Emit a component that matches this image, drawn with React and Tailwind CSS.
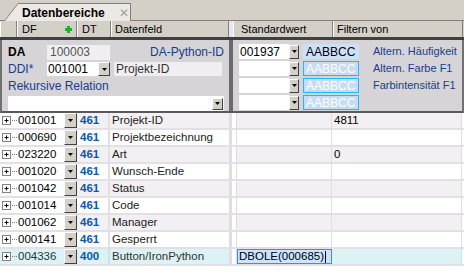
import React from "react";

const rows = [
  { df: "001001", dt: "461", name: "Projekt-ID", std: "", filt: "4811" },
  { df: "000690", dt: "461", name: "Projektbezeichnung", std: "", filt: "" },
  { df: "023220", dt: "461", name: "Art", std: "", filt: "0" },
  { df: "001020", dt: "461", name: "Wunsch-Ende", std: "", filt: "" },
  { df: "001042", dt: "461", name: "Status", std: "", filt: "" },
  { df: "001014", dt: "461", name: "Code", std: "", filt: "" },
  { df: "001062", dt: "461", name: "Manager", std: "", filt: "" },
  { df: "000141", dt: "461", name: "Gesperrt", std: "", filt: "" },
];

const filterLabels = ["Altern. Häufigkeit", "Altern. Farbe F1", "Farbintensität F1", ""];

const DropBtn = ({ className = "" }) => (
  <div
    className={
      "flex items-center justify-center bg-[#d4d0c8] border border-t-white border-l-white border-r-[#404040] border-b-[#404040] " +
      className
    }
  >
    <svg width="5" height="3" viewBox="0 0 5 3">
      <path d="M0 0h5L2.5 3z" fill="#000" />
    </svg>
  </div>
);

const Expander = () => (
  <div className="flex items-center w-[17px] shrink-0 pl-[2px]">
    <svg width="15" height="9" viewBox="0 0 15 9">
      <rect x="0.5" y="0.5" width="8" height="8" fill="#fff" stroke="#808080" />
      <path d="M2.5 4.5h4M4.5 2.5v4" stroke="#000" />
      <path d="M10 4.5h1M12 4.5h1M14 4.5h1" stroke="#808080" />
    </svg>
  </div>
);

const HeadCell = ({ w, children, className = "" }) => (
  <div
    className={
      "h-full flex items-center border-r border-r-[#808080] shadow-[inset_1px_0_0_#fff] " +
      w +
      " " +
      className
    }
  >
    {children}
  </div>
);

export default function App() {
  return (
    <div
      className="w-[464px] h-[276px] bg-white overflow-hidden text-[11px] text-black"
      style={{ fontFamily: "Tahoma, 'Liberation Sans', Arial, sans-serif" }}
    >
      {/* tab strip */}
      <div className="h-[21px] bg-[#d4d0c8] relative border-b border-b-[#808080]">
        <div className="absolute left-[4px] top-[3px] h-[18px] w-[127px] flex">
          <svg width="14" height="18" viewBox="0 0 14 18" className="shrink-0">
            <path d="M0 18L14 0V18z" fill="#ece9e4" />
            <path d="M0.5 18L14 0.5" stroke="#808080" />
          </svg>
          <div className="flex-1 bg-[#ece9e4] border-t border-t-[#808080] border-r border-r-[#808080] flex items-center pl-[4px]">
            <span className="font-bold text-[12px] leading-none">Datenbereiche</span>
            <span className="ml-[14px] text-[#a0a0a0] text-[12px] leading-none">✕</span>
          </div>
        </div>
      </div>

      {/* column header */}
      <div className="h-[16px] flex bg-[#d4d0c8] border-b-[3px] border-b-[#404040] box-content">
        <HeadCell w="w-[17px]" />
        <HeadCell w="w-[60px]" className="pl-[5px] justify-between pr-[4px]">
          <span>DF</span>
          <svg width="7" height="7" viewBox="0 0 7 7">
            <path d="M2 0h3v2h2v3H5v2H2V5H0V2h2z" fill="#22b022" />
          </svg>
        </HeadCell>
        <HeadCell w="w-[34px]" className="pl-[5px]">DT</HeadCell>
        <HeadCell w="w-[118px]" className="pl-[4px]">Datenfeld</HeadCell>
        <div className="w-[4px] h-full bg-[#e8e6ea]" />
        <HeadCell w="w-[100px]" className="pl-[8px]">Standardwert</HeadCell>
        <HeadCell w="w-[130px]" className="pl-[4px]">Filtern von</HeadCell>
        <div className="flex-1" />
      </div>

      {/* top panel */}
      <div className="h-[73px] flex bg-[#d6d4d6] border-l-[2px] border-l-[#707070] border-b-[2px] border-b-[#5a5a5a] border-r-[2px] border-r-[#707070]">
        <div className="w-[227px] flex flex-col pl-[6px] pt-[4px]">
          <div className="flex items-center h-[16px]">
            <span className="font-bold text-[12px] w-[39px]">DA</span>
            <div className="w-[63px] h-[15px] bg-[#f0eef0] text-[#555] text-[12px] pl-[3px] flex items-center">100003</div>
            <span className="ml-auto mr-[5px] text-[#1a3c8c] text-[12px]">DA-Python-ID</span>
          </div>
          <div className="flex items-center h-[14px] mt-[2px]">
            <span className="text-[#1a3c8c] text-[12px] w-[39px]">DDI*</span>
            <div className="w-[51px] h-[14px] bg-white pl-[1px] flex items-center text-[12px]">001001</div>
            <DropBtn className="w-[12px] h-[14px]" />
            <div className="ml-[4px] w-[108px] h-[14px] bg-[#f0eef0] text-[#333] text-[12px] pl-[2px] flex items-center">
              Projekt-ID
            </div>
          </div>
          <div className="h-[17px] flex items-center text-[#1a3c8c] text-[12px] mt-[1px]">Rekursive Relation</div>
          <div className="mt-[2px] w-[216px] h-[15px] bg-white flex justify-end items-center">
            <DropBtn className="w-[11px] h-[12px] mr-[1px]" />
          </div>
        </div>
        <div className="w-[4px] border-l-[3px] border-l-[#6a6a6a] border-r border-r-[#6a6a6a] bg-[#e8e6ea]" />
        <div className="flex-1 flex flex-col pl-[6px] pt-[4px] gap-[2px]">
          {filterLabels.map((label, i) => (
            <div key={i} className="flex items-center h-[15px]">
              <div className="w-[50px] h-[15px] bg-white pl-[1px] flex items-center text-[12px]">
                {i === 0 ? "001937" : ""}
              </div>
              <DropBtn className="w-[10px] h-[14px]" />
              {i === 0 ? (
                <div className="ml-[4px] w-[56px] h-[15px] bg-[#cde0fa] flex items-center pl-[3px] text-[12px]">
                  AABBCC
                </div>
              ) : (
                <div className="ml-[4px] w-[56px] h-[15px] bg-[#c6dcf4] border border-[#10c0f8] flex items-center pl-[2px] text-[12px] text-white">
                  AABBCC
                </div>
              )}
              <span className="ml-[14px] text-[#1a3c8c] text-[11px] whitespace-nowrap">{label}</span>
            </div>
          ))}
        </div>
      </div>

      {/* data rows */}
      <div className="flex flex-col text-[11.5px]">
        {rows.map((r, i) => {
          const bg = i % 2 === 0 ? "bg-[#f2f0f2]" : "bg-white";
          return (
            <div key={r.df} className="h-[17px] flex border-b-[2px] border-b-[#e2e0e4] box-border">
              <Expander />
              <div className="w-[47px] bg-white flex items-center pl-[1px]">{r.df}</div>
              <DropBtn className="w-[13px]" />
              <div className={"w-[33px] flex items-center pl-[3px] font-bold text-[#0a58b0] border-r-[2px] border-r-[#e2e0e4] " + bg}>
                {r.dt}
              </div>
              <div className={"w-[119px] flex items-center pl-[2px] text-[#222] " + bg}>{r.name}</div>
              <div className="w-[8px] border-l-[3px] border-l-[#e0dce4] border-r border-r-[#e0dce4] bg-white" />
              <div className={"w-[95px] border-r border-r-[#e0dce4] " + bg} />
              <div className={"w-[130px] border-r border-r-[#e0dce4] flex items-center pl-[2px] " + bg}>{r.filt}</div>
              <div className="flex-1 bg-white" />
            </div>
          );
        })}
        <div className="h-[17px] flex border-b-[2px] border-b-[#e2e0e4] bg-[#dcf2f4]">
          <Expander />
          <div className="w-[47px] flex items-center pl-[1px] text-[#1a3a3a]">004336</div>
          <DropBtn className="w-[13px] bg-[#c8d8d4]" />
          <div className="w-[33px] flex items-center pl-[3px] font-bold text-[#0a58b0] border-r-[2px] border-r-[#c8e6ea]">400</div>
          <div className="w-[119px] flex items-center pl-[2px] text-[#333]">Button/IronPython</div>
          <div className="w-[8px] border-l-[3px] border-l-[#e0dce4] border-r border-r-[#e0dce4] bg-white" />
          <div className="w-[95px] bg-[#cce4ff] border border-[#3a8ee8] flex items-center pl-[1px]">
            DBOLE(000685)
            <span className="inline-block w-[1px] h-[12px] bg-black ml-[1px]" />
          </div>
          <div className="w-[130px] border-r border-r-[#c8e6ea]" />
          <div className="flex-1 bg-white" />
        </div>
      </div>
    </div>
  );
}
